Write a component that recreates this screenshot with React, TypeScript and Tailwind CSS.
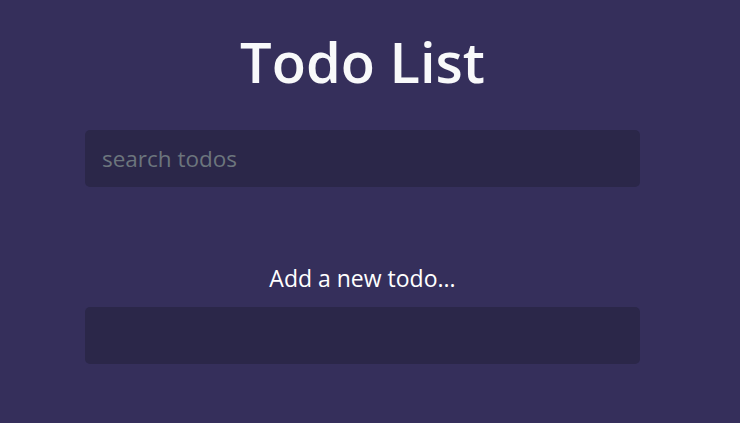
export default function App() {
  return (
    <div
      className="min-h-[423px] w-full bg-[#352f5b] text-white"
      style={{ fontFamily: '"Open Sans", "Noto Sans", sans-serif' }}
    >
      <div className="flex w-[725px] flex-col items-center">
        <h1 className="mt-[25px] h-[73px] text-[56px] leading-[73px] font-semibold text-[#f8f9fa]">Todo List</h1>
        <input
          type="text"
          placeholder="search todos"
          className="mt-[32px] h-[57px] w-[555px] rounded-[5px] bg-[#2b2749] px-[17px] text-[22.5px] text-white outline-none placeholder:text-[#6c757d]"
        />
        <p className="mt-[76px] text-[23px] leading-[30px] text-white">Add a new todo...</p>
        <input
          type="text"
          className="mt-[14px] h-[57px] w-[555px] rounded-[5px] bg-[#2b2749] px-[17px] text-[22.5px] text-white outline-none"
        />
      </div>
    </div>
  );
}
